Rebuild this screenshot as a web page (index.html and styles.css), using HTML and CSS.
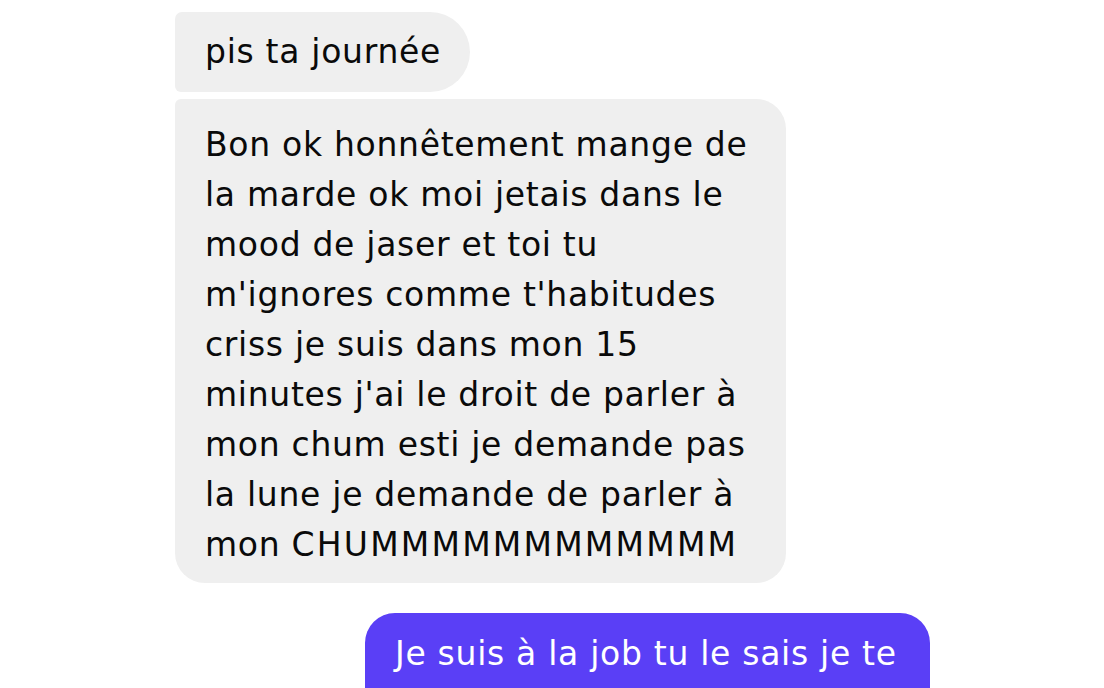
FILE: index.html
```html
<!DOCTYPE html>
<html lang="fr">
<head>
<meta charset="utf-8">
<link rel="stylesheet" href="styles.css">
<title>Chat</title>
</head>
<body>
<div class="thread">
  <div class="bubble in first">pis ta journée</div>
  <div class="bubble in last">Bon ok honnêtement mange de<br>la marde ok moi jetais dans le<br>mood de jaser et toi tu<br>m'ignores comme t'habitudes<br>criss je suis dans mon 15<br>minutes j'ai le droit de parler à<br>mon chum esti je demande pas<br>la lune je demande de parler à<br>mon <span class="caps">CHUMMMMMMMMMMMM</span></div>
  <div class="bubble out">Je suis à la job tu le sais je te</div>
</div>
</body>
</html>
```

FILE: styles.css
```css
html, body {
  margin: 0;
  padding: 0;
  height: 688px;
  overflow: hidden;
  background: #ffffff;
}
.thread {
  display: flex;
  flex-direction: column;
  align-items: flex-start;
  padding: 12px 174px 0 175px;
  font-family: "DejaVu Sans", "Liberation Sans", sans-serif;
  font-size: 33px;
  letter-spacing: 0.7px;
  line-height: 50px;
}
.bubble {
  box-sizing: border-box;
  white-space: nowrap;
}
.in {
  background: #efefef;
  color: #0a0a0a;
}
.first {
  padding: 15px 29px 15px 30px;
  border-radius: 7px 40px 40px 6px;
  margin-bottom: 7px;
}
.last {
  width: 611px;
  padding: 21px 30px 13px 30px;
  border-radius: 6px 30px 30px 30px;
}
.caps {
  letter-spacing: 2.2px;
}
.out {
  align-self: flex-end;
  width: 565px;
  margin-top: 30px;
  padding: 16px 30px 60px 30px;
  background: #5a3ff6;
  color: #ffffff;
  border-radius: 30px 30px 6px 30px;
}
```
